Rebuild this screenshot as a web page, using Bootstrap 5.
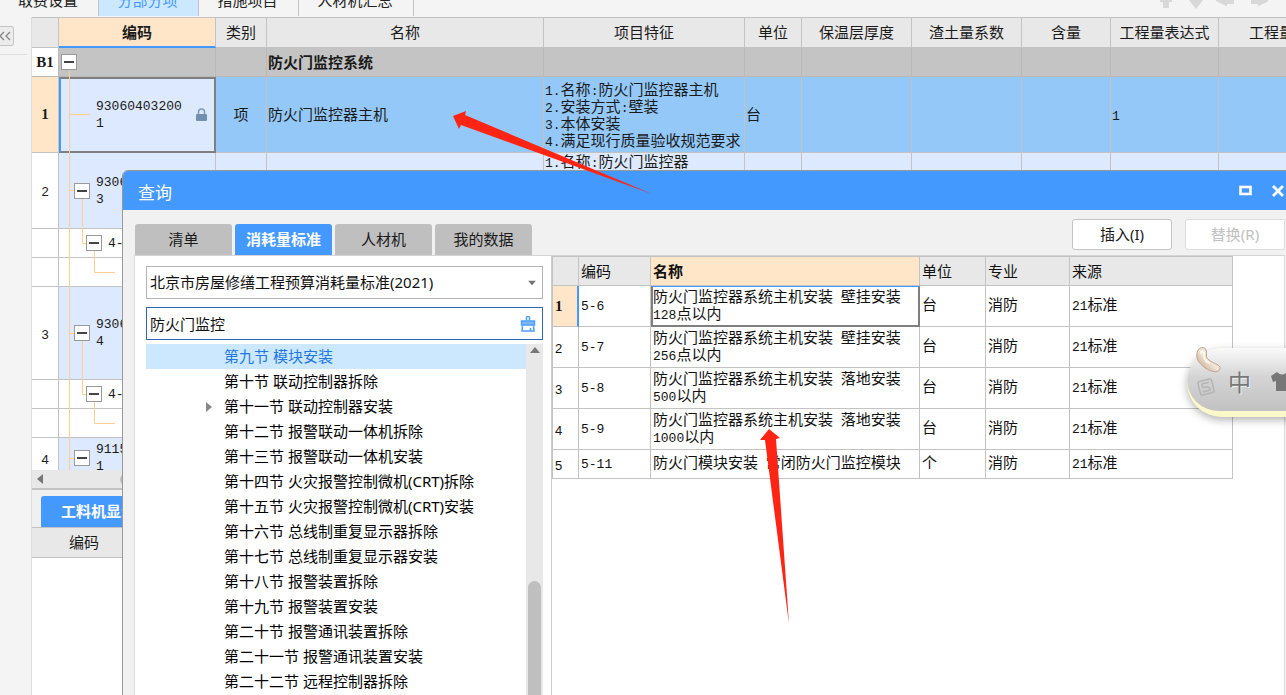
<!DOCTYPE html>
<html lang="zh-CN">
<head>
<meta charset="utf-8">
<meta name="viewport" content="width=device-width, initial-scale=1">
<title>分部分项 - 查询</title>
<link href="https://cdn.jsdelivr.net/npm/bootstrap@5.3.0/dist/css/bootstrap.min.css" rel="stylesheet">
<style>
:root { --line:#c3c3c3; --accent:#4499ff; --head:#e8e8e8; --peach:#ffe6c8; --tree:#ffcf8f; }
body { font-family:"Noto Sans","Noto Sans CJK SC",sans-serif; font-size:15px; line-height:17px; color:#1a1a1a; background:#f4f4f4; overflow:hidden; }
button, input, select { font:inherit; color:inherit; }
.n { font-family:"Liberation Mono","Noto Sans CJK SC",monospace; font-size:13px; line-height:1; }
.code-box .n { line-height:17px; }
.top-tabs { height:17px; overflow:hidden; background:#f4f4f4; }
.top-tabs .nav-link { height:32px; margin-top:-16px; padding:7px 2px 0 0; width:100px; text-align:center; color:#222; border-right:1px solid var(--line); line-height:18px; white-space:nowrap; }
.top-tabs .nav-link.first { width:99px; }
.top-tabs .nav-link.wide { width:115px; }
.top-tabs .nav-link.active { background:#cce8ff; color:var(--accent); }
.move-icons { width:112px; margin-right:14px; }
.move-icons svg { display:block; }
.side { width:32px; border-right:1px solid #dcdcdc; flex:none; }
.side-fold { height:38px; width:27px; padding-top:9px; border-bottom:1px solid #dedede; }
.side-fold button { width:14px; height:20px; border:1px solid #c4c4c4; border-left:0; border-radius:0 3px 3px 0; background:#ececec; padding:0; display:flex; align-items:center; }
.grid-view { height:453px; overflow:hidden; border-top:1px solid var(--line); background:#fff; }
.grid-table, .result-table { table-layout:fixed; border-collapse:separate; border-spacing:0; }
.grid-table { width:1293px; }
.grid-table th, .grid-table td { border-right:1px solid var(--line); border-bottom:1px solid var(--line); padding:0 1px; font-weight:400; vertical-align:middle; }
.grid-table thead th { background:var(--head); text-align:center; height:30px; }
.grid-table thead th.hot { background:var(--peach); font-weight:700; border-bottom:2px solid var(--accent); }
.grid-table .idx { text-align:center; background:#fff; }
.grid-table tbody .idx .n { font-family:"Liberation Sans",sans-serif; }
.grid-table tr.sec td { background:#c4c4c4; border-color:#b9b9b9; font-weight:700; }
.grid-table tr.sec .idx, .grid-table tr.cur .idx { font-family:"Liberation Serif",serif; font-weight:700; }
.grid-table tr.cur td { background:#93c8f8; }
.grid-table tr.cur td.idx { background:var(--peach); }
.grid-table tr.item td { background:#dde9fe; }
.grid-table tr.cur td.code { background:#dde9fe; border:2px solid #7f7f7f; border-left-color:var(--accent); }
.r-sec { height:29px; } .r-main { height:76px; } .r-sub { height:29px; } .r-tall { height:93px; }
.code-box { display:flex; align-items:center; gap:6px; }
.lv0 { padding-left:1px; } .lv1 { padding-left:14px; } .lv2 { padding-left:26px; }
.leaf { padding-left:34px; padding-right:6px; justify-content:space-between; }
.fold { width:16px; height:16px; flex:none; border:1px solid #999; background:#fff; padding:0; position:relative; z-index:2; }
.fold::before { content:""; display:block; width:10px; height:2px; background:#444; margin:auto; }
.links { position:absolute; left:0; top:0; z-index:1; pointer-events:none; }
.hbar { height:18px; background:#e8e8e8; padding-left:5px; }
.hbar i { width:300px; height:13px; border-radius:7px; background:#bfbfbf; margin-left:76px; }
.lower-tabs { height:40px; border-top:2px solid var(--line); border-bottom:1px solid var(--line); padding:6px 0 0 9px; background:#f0f0f0; }
.lower-tabs button { background:var(--accent); color:#fff; font-weight:700; border:0; border-radius:3px 3px 0 0; height:31px; padding:0 20px; }
.lower-head { height:30px; background:var(--head); border-bottom:1px solid var(--line); padding:6px 37px; }
.query { position:absolute; left:122px; top:170px; right:-12px; bottom:-12px; background:#f1f1f1; border:1px solid #999; border-radius:6px 0 0 0; z-index:10; overflow:hidden; }
.query-title { height:39px; background:var(--accent); color:#fff; padding:0 12px 0 15px; }
.query-title h1 { font-size:17px; line-height:20px; font-weight:400; margin:4px 0 0; }
.query-title .win { gap:18px; }
.query-title button { border:0; background:none; padding:0; width:14px; height:14px; display:flex; }
.query-tools { height:45px; padding:9px 12px 0 12px; }
.kind-tabs { gap:3px; padding-top:5px; }
.kind-tabs button { width:97px; height:31px; border:0; border-radius:3px 3px 0 0; background:#bfbfbf; padding:0; }
.kind-tabs button.active { background:var(--accent); color:#fff; font-weight:700; }
.tool-set { gap:13px; }
.tool-btn { width:100px; height:31px; border:1px solid #c4c4c4; border-radius:3px; background:#fff; padding:0; }
.tool-btn:disabled { color:#c0c0c0; border-color:#dcdcdc; }
.query-body { margin:0 12px 0 11px; border-top:1px solid #d4d4d4; border-left:1px solid #ddd; border-right:1px solid #ddd; background:#fff; }
.finder { width:417px; flex:none; padding:10px 8px 0 11px; border-right:1px solid #ccc; }
.field { position:relative; height:33px; }
.field select, .field input { width:100%; height:100%; border:1px solid #b4b4b4; border-radius:0; background:#fff; padding:0 3px; appearance:none; outline:0; color:#111; }
.field input { border:1px solid #2f65b5; }
.field svg { position:absolute; right:7px; top:50%; transform:translateY(-50%); pointer-events:none; }
.sections { margin:0; padding:0; list-style:none; color:#000; }
.sections li { height:25px; padding:4px 0 4px 78px; position:relative; white-space:nowrap; }
.sections li.on { background:#cce8ff; color:#2177e0; }
.sections .expander { position:absolute; left:60px; top:8px; width:6px; height:10px; }
.vbar { width:17px; background:#e8e8e8; flex:none; padding:3px 2px 0; }
.vbar i { width:13px; background:#bfbfbf; border-radius:7px 7px 0 0; margin-top:228px; }
.result-table { width:681px; border-left:1px solid var(--line); border-top:1px solid var(--line); color:#111; }
.result-table th, .result-table td { border-right:1px solid var(--line); border-bottom:1px solid var(--line); padding:0 2px; height:41px; font-weight:400; vertical-align:middle; }
.result-table td:nth-child(n+2) { padding-bottom:3px; }
.result-table thead th { background:var(--head); height:29px; }
.result-table thead th.hot { background:var(--peach); font-weight:700; }
.result-table tr.short td { height:29px; }
.result-table td:first-child .n { font-family:"Liberation Sans",sans-serif; }
.result-table tr.cur td:first-child { background:var(--peach); border-right:2px solid var(--accent); font-family:"Liberation Serif",serif; font-weight:700; }
.result-table tr.cur td.pick { border:2px solid #7f7f7f; border-top:1px solid var(--accent); padding:0 0 2px; }
.ime { position:absolute; right:-60px; top:348px; width:159px; height:69px; z-index:20; }
.ime-pill { height:69px; border-radius:35px; background:#fbf9c9; box-shadow:0 3px 8px rgba(0,0,0,.3); overflow:hidden; }
.ime-face { height:63px; border-radius:32px; background:linear-gradient(#fafafa,#d6d5d6 45%,#c2c1c2); }
.ime-text { position:absolute; left:41px; top:20px; font-size:23px; line-height:26px; color:#777; text-shadow:1px 1px #eee; font-family:"Noto Sans CJK SC",sans-serif; }
.ime svg { position:absolute; left:0; top:-4px; }
.marks { position:absolute; inset:0; width:100%; height:100%; z-index:30; pointer-events:none; }
</style>
</head>
<body>
<div class="vh-100 d-flex flex-column position-relative overflow-hidden">
  <nav class="top-tabs d-flex">
    <a class="nav-link first" href="#">取费设置</a>
    <a class="nav-link active" href="#">分部分项</a>
    <a class="nav-link" href="#">措施项目</a>
    <a class="nav-link wide" href="#">人材机汇总</a>
    <div class="move-icons ms-auto"><svg width="112" height="12" fill="#d8d8d8"><path d="M0 0H12V2H9V8H3V2H0zM29 0H43L36 9zM56 1V0H74V4H67V6.500zM98 6.500V4H91V0H108V1.500z"/></svg></div>
  </nav>
  <div class="d-flex flex-grow-1">
    <aside class="side">
      <div class="side-fold"><button type="button" aria-label="收起"><svg width="12" height="12" fill="none" stroke="#888" stroke-width="1.4"><path d="M4 2 0 6 4 10M10 2 6 6 10 10"/></svg></button></div>
    </aside>
    <main class="flex-grow-1 bg-white overflow-hidden">
      <div class="grid-view position-relative">
        <table class="grid-table">
          <colgroup><col style="width:27px"><col style="width:157px"><col style="width:51px"><col style="width:277px"><col style="width:201px"><col style="width:57px"><col style="width:110px"><col style="width:110px"><col style="width:89px"><col style="width:108px"><col style="width:106px"></colgroup>
          <thead><tr><th></th><th class="hot">编码</th><th>类别</th><th>名称</th><th>项目特征</th><th>单位</th><th>保温层厚度</th><th>渣土量系数</th><th>含量</th><th>工程量表达式</th><th>工程量</th></tr></thead>
          <tbody>
            <tr class="sec r-sec"><td class="idx bg-white">B1</td><td><div class="code-box lv0"><button class="fold" aria-label="折叠"></button></div></td><td></td><td>防火门监控系统</td><td></td><td></td><td></td><td></td><td></td><td></td><td></td></tr>
            <tr class="cur r-main"><td class="idx">1</td><td class="code"><div class="code-box leaf"><span class="n">93060403200<br>1</span><svg width="11" height="14"><path d="M2.500 6V4a3 3 0 0 1 6 0v2" fill="none" stroke="#7f9bb5" stroke-width="1.500"/><rect y="6" width="11" height="7" rx="1" fill="#7090ae"/></svg></div></td><td class="text-center">项</td><td>防火门监控器主机</td><td><span class="n">1.</span>名称<span class="n">:</span>防火门监控器主机<br><span class="n">2.</span>安装方式<span class="n">:</span>壁装<br><span class="n">3.</span>本体安装<br><span class="n">4.</span>满足现行质量验收规范要求</td><td>台</td><td></td><td></td><td></td><td><span class="n">1</span></td><td></td></tr>
            <tr class="item r-main"><td class="idx bg-white"><span class="n">2</span></td><td><div class="code-box lv1"><button class="fold" aria-label="折叠"></button><span class="n">9306<br>3</span></div></td><td></td><td></td><td class="align-top"><span class="n">1.</span>名称<span class="n">:</span>防火门监控器</td><td></td><td></td><td></td><td></td><td></td><td></td></tr>
            <tr class="r-sub"><td></td><td><div class="code-box lv2"><button class="fold" aria-label="折叠"></button><span class="n">4-</span></div></td><td></td><td></td><td></td><td></td><td></td><td></td><td></td><td></td><td></td></tr>
            <tr class="r-sub"><td></td><td></td><td></td><td></td><td></td><td></td><td></td><td></td><td></td><td></td><td></td></tr>
            <tr class="item r-tall"><td class="idx bg-white"><span class="n">3</span></td><td><div class="code-box lv1"><button class="fold" aria-label="折叠"></button><span class="n">9306<br>4</span></div></td><td></td><td></td><td></td><td></td><td></td><td></td><td></td><td></td><td></td></tr>
            <tr class="r-sub"><td></td><td><div class="code-box lv2"><button class="fold" aria-label="折叠"></button><span class="n">4-</span></div></td><td></td><td></td><td></td><td></td><td></td><td></td><td></td><td></td><td></td></tr>
            <tr class="r-sub"><td></td><td></td><td></td><td></td><td></td><td></td><td></td><td></td><td></td><td></td><td></td></tr>
            <tr class="item" style="height:41px"><td class="idx bg-white"><span class="n">4</span></td><td><div class="code-box lv1"><button class="fold" aria-label="折叠"></button><span class="n">9115<br>1</span></div></td><td></td><td></td><td></td><td></td><td></td><td></td><td></td><td></td><td></td></tr>
          </tbody>
        </table>
        <svg class="links" width="100" height="453" fill="none" stroke="#ffcf8f"><path d="M37.500 53V453M37.500 96.500H58M37.500 172.500H42M50.500 180V225.500H55M62.500 232V254.500H83M37.500 315.500H42M50.500 322V376.500H55M62.500 384V405.500H83M37.500 440.500H42"/></svg>
      </div>
      <div class="hbar d-flex align-items-center"><svg width="7" height="10"><path d="M6 0V10L0 5z" fill="#777"/></svg><i></i></div>
      <div class="lower-tabs"><button type="button">工料机显示</button></div>
      <div class="lower-head">编码</div>
    </main>
  </div>

  <section class="query d-flex flex-column" aria-label="查询">
    <header class="query-title d-flex align-items-center justify-content-between">
      <h1>查询</h1>
      <div class="win d-flex">
        <button type="button" aria-label="最大化"><svg width="14" height="14"><rect x="1.500" y="3" width="10" height="7" fill="none" stroke="#fff" stroke-width="2.600"/></svg></button>
        <button type="button" aria-label="关闭"><svg width="14" height="14"><path d="M2 2 12 12M12 2 2 12" stroke="#fff" stroke-width="2.800"/></svg></button>
      </div>
    </header>
    <div class="query-tools d-flex justify-content-between">
      <div class="kind-tabs d-flex">
        <button type="button">清单</button><button type="button" class="active">消耗量标准</button><button type="button">人材机</button><button type="button">我的数据</button>
      </div>
      <div class="d-flex tool-set"><button class="tool-btn" type="button">插入(I)</button><button class="tool-btn" type="button" disabled>替换(R)</button></div>
    </div>
    <div class="query-body d-flex flex-grow-1 overflow-hidden">
      <div class="finder d-flex flex-column">
        <div class="field"><select aria-label="标准"><option>北京市房屋修缮工程预算消耗量标准(2021)</option></select><svg width="8" height="5"><path d="M0 0H8L4 5z" fill="#777"/></svg></div>
        <div class="field mt-2"><input type="text" aria-label="搜索" value="防火门监控"><svg width="16" height="17" fill="none" stroke="#4d9fff" stroke-width="1.500"><path d="M1.500 9.500V5.500H14.500V9.500z" fill="#7bb8ff"/><path d="M6.500 5V2.500a1.500 1.500 0 0 1 3 0V5M2.500 10 2 15.500H14L13.500 10M10.500 12.500V15"/></svg></div>
        <div class="d-flex flex-grow-1 overflow-hidden pt-1">
          <ul class="sections flex-grow-1">
            <li class="on">第九节 模块安装</li><li>第十节 联动控制器拆除</li><li><svg class="expander"><path d="M0 0 6 5 0 10z" fill="#888"/></svg>第十一节 联动控制器安装</li><li>第十二节 报警联动一体机拆除</li><li>第十三节 报警联动一体机安装</li><li>第十四节 火灾报警控制微机(CRT)拆除</li><li>第十五节 火灾报警控制微机(CRT)安装</li><li>第十六节 总线制重复显示器拆除</li><li>第十七节 总线制重复显示器安装</li><li>第十八节 报警装置拆除</li><li>第十九节 报警装置安装</li><li>第二十节 报警通讯装置拆除</li><li>第二十一节 报警通讯装置安装</li><li>第二十二节 远程控制器拆除</li>
          </ul>
          <div class="vbar d-flex flex-column align-items-center"><svg width="10" height="6" class="flex-shrink-0"><path d="M0 6H10L5 0z" fill="#777"/></svg><i class="flex-grow-1"></i></div>
        </div>
      </div>
      <div>
        <table class="result-table">
          <colgroup><col style="width:26px"><col style="width:72px"><col style="width:269px"><col style="width:66px"><col style="width:84px"><col style="width:163px"></colgroup>
          <thead><tr><th></th><th>编码</th><th class="hot">名称</th><th>单位</th><th>专业</th><th>来源</th></tr></thead>
          <tbody>
            <tr class="cur"><td>1</td><td><span class="n">5-6</span></td><td class="pick">防火门监控器系统主机安装<span class="n"> </span>壁挂安装<br><span class="n">128</span>点以内</td><td>台</td><td>消防</td><td><span class="n">21</span>标准</td></tr>
            <tr><td><span class="n">2</span></td><td><span class="n">5-7</span></td><td>防火门监控器系统主机安装<span class="n"> </span>壁挂安装<br><span class="n">256</span>点以内</td><td>台</td><td>消防</td><td><span class="n">21</span>标准</td></tr>
            <tr><td><span class="n">3</span></td><td><span class="n">5-8</span></td><td>防火门监控器系统主机安装<span class="n"> </span>落地安装<br><span class="n">500</span>以内</td><td>台</td><td>消防</td><td><span class="n">21</span>标准</td></tr>
            <tr><td><span class="n">4</span></td><td><span class="n">5-9</span></td><td>防火门监控器系统主机安装<span class="n"> </span>落地安装<br><span class="n">1000</span>以内</td><td>台</td><td>消防</td><td><span class="n">21</span>标准</td></tr>
            <tr class="short"><td><span class="n">5</span></td><td><span class="n">5-11</span></td><td>防火门模块安装<span class="n"> </span>常闭防火门监控模块</td><td>个</td><td>消防</td><td><span class="n">21</span>标准</td></tr>
          </tbody>
        </table>
      </div>
    </div>
  </section>

  <div class="ime">
    <div class="ime-pill"><div class="ime-face"></div></div>
    <span class="ime-text">中</span>
    <svg width="110" height="70">
      <defs><linearGradient id="bean" x1="0" y1="1" x2="1" y2="0"><stop offset="0" stop-color="#b59a80"/><stop offset=".5" stop-color="#f3e6d8"/><stop offset="1" stop-color="#d9c4b0"/></linearGradient></defs>
      <path d="M10 10C10 4 17 1 19 6C21 10 17 12 22 16C26 20 34 20 33 25C31 30 22 27 17 23C12 19 9 15 10 10Z" fill="url(#bean)" stroke="#bda58e"/>
      <path d="M14 9C15 6 17 7 17 9C16 13 18 17 22 19" fill="none" stroke="#fff8ee" stroke-width="2" stroke-linecap="round"/>
      <g transform="rotate(-14 19 43)" fill="none" stroke="#b5b4b5" stroke-width="1.500"><rect x="12" y="36" width="14" height="14" rx="2"/><path d="M23 39H16Q14 43 19 43Q24 44 22 47H15"/></g>
      <path d="M84 32 90 28Q95 33 100 28L106 32 104 38 101 37V47H89V37L86 38z" fill="#777"/>
    </svg>
  </div>
  <svg class="marks" fill="#ff2414"><path d="M453 116 466 111 465 115 652 194 461 125 459 129z"/><path d="M769 429 780 438 776 439 789 624 765 440 760 440z"/></svg>
</div>
<script src="https://cdn.jsdelivr.net/npm/bootstrap@5.3.0/dist/js/bootstrap.bundle.min.js"></script>
</body>
</html>
